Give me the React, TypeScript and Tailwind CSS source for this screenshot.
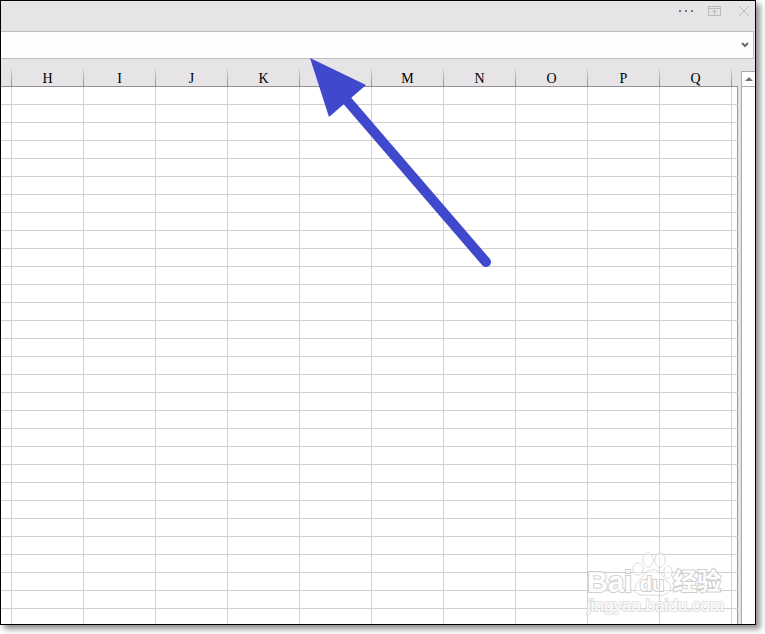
import React from 'react';

const COLUMNS = ['H', 'I', 'J', 'K', 'L', 'M', 'N', 'O', 'P', 'Q'];
const ROW_COUNT = 29;

const rows = Array.from({ length: ROW_COUNT }, (_, i) => i);

const TitleBar = () => (
  <div className="flex h-[30px] items-start justify-end gap-3 pt-1 pr-[5px]">
    <button type="button" aria-label="More" className="flex h-3 w-[17px] items-center">
      <svg width="17" height="12" viewBox="0 0 17 12" fill="#777579">
        <rect x="0" y="5" width="2" height="2" />
        <rect x="6" y="5" width="2" height="2" />
        <rect x="12" y="5" width="2" height="2" />
      </svg>
    </button>
    <button type="button" aria-label="Ribbon display options">
      <svg width="14" height="12" viewBox="0 0 14 12" fill="none" stroke="#bab8bb">
        <path d="M.5 1.5h12v9H.5zM.5 3.5h12M6.5 10V5M4 7.5L6.5 5 9 7.5" />
      </svg>
    </button>
    <button type="button" aria-label="Close" className="ml-1">
      <svg width="12" height="12" viewBox="0 0 12 12" fill="none" stroke="#bcbabd">
        <path d="M1 1l10 10M11 1L1 11" />
      </svg>
    </button>
  </div>
);

const FormulaBar = () => (
  <div className="mr-px flex h-7 items-center border border-l-0 border-[#bfbdc0] bg-[#fefdff]">
    <input aria-label="Formula bar" className="h-full min-w-0 flex-1 bg-transparent px-2 text-sm outline-none" />
    <button type="button" aria-label="Expand formula bar" className="pr-1">
      <svg width="8" height="6" viewBox="0 0 8 6" fill="none" stroke="#6c6a6d" strokeWidth="2">
        <path d="M1 1l3 3 3-3" />
      </svg>
    </button>
  </div>
);

const Sheet = () => (
  <table className="w-full table-fixed border-separate border-spacing-0">
    <colgroup>
      <col className="w-[11px]" />
      {COLUMNS.map((name) => (
        <col key={name} className="w-[72px]" />
      ))}
      <col />
    </colgroup>
    <thead>
      <tr className="h-7 bg-[#e6e4e7]">
        {['', ...COLUMNS].map((name) => (
          <th
            key={name}
            className="relative h-7 border-b border-[#929093] p-0 pt-[13px] pr-px text-center align-top font-['Liberation_Serif',serif] text-[14px] leading-[14px] font-normal text-black"
          >
            {name}
            <span className="absolute right-0 bottom-0 h-[17px] w-px bg-linear-to-b from-[#d0ced1] to-[#8f8d90]" />
          </th>
        ))}
        <th className="border-b border-[#929093] p-0" />
      </tr>
    </thead>
    <tbody>
      {rows.map((row) => (
        <tr key={row}>
          {['', ...COLUMNS].map((name) => (
            <td key={name} className="h-[18px] border-r border-b border-[#d0d0d0] p-0" />
          ))}
          <td className="h-[18px] border-r border-b border-r-[#99979a] border-b-[#d0d0d0] p-0" />
        </tr>
      ))}
      <tr>
        {['', ...COLUMNS].map((name) => (
          <td key={name} className="h-[15px] border-r border-[#d0d0d0] p-0" />
        ))}
        <td className="border-r border-[#99979a] p-0" />
      </tr>
    </tbody>
  </table>
);

const ScrollBar = () => (
  <div className="flex w-[17px] shrink-0 flex-col bg-[#e6e4e7] pt-3 pl-[3px]">
    <button
      type="button"
      aria-label="Scroll up"
      className="flex h-4 items-center justify-center border border-r-0 border-[#acaaad] bg-white"
    >
      <svg width="8" height="4" viewBox="0 0 8 4" fill="#737174">
        <path d="M4 0l4 4H0z" />
      </svg>
    </button>
    <div className="flex-1 border-l border-[#acaaad] bg-white" />
  </div>
);

const Arrow = () => (
  <svg className="pointer-events-none absolute top-[57px] left-[309px]" width="184" height="212" viewBox="0 0 184 212" fill="#4048cc">
    <path d="M0 0L56 27 19 59z" />
    <path d="M34 39L176 204" stroke="#4048cc" strokeWidth="10" strokeLinecap="round" />
  </svg>
);

const Watermark = () => (
  <div className="pointer-events-none absolute right-8 bottom-2 w-[136px] font-['Liberation_Sans','Noto_Sans_CJK_SC',sans-serif] font-bold whitespace-nowrap text-white opacity-80 [paint-order:stroke] [-webkit-text-stroke:2px_#c4c4c4]">
    <div className="flex items-end">
      <span className="w-11 text-[29px] leading-7">Bai</span>
      <div className="relative h-11 w-[42px]">
        <svg width="42" height="44" viewBox="0 0 42 44" fill="#ffffffaa" stroke="#bebebe">
          <ellipse cx="7" cy="17" rx="5" ry="6" />
          <ellipse cx="17" cy="8" rx="5" ry="7" />
          <ellipse cx="29" cy="8" rx="5" ry="7" />
          <ellipse cx="37" cy="20" rx="4" ry="6" />
          <path d="M22 18c-8 0-10 7-14 11-7 6-4 14 4 14h18c9 0 13-8 6-14-5-4-6-11-14-11z" />
        </svg>
        <span className="absolute inset-x-0 bottom-0 text-center text-[20px] leading-6">du</span>
      </div>
      <span className="text-[24px] leading-7">经验</span>
    </div>
    <div className="text-[17px] leading-5 font-normal [-webkit-text-stroke:2px_#dadada]">jingyan.baidu.com</div>
  </div>
);

export default function App() {
  return (
    <div className="overflow-hidden bg-white pb-[9px]">
      <main className="relative mr-[9px] border border-black bg-[#e6e4e7] shadow-[4px_4px_6px_rgba(0,0,0,0.45)]">
        <TitleBar />
        <FormulaBar />
        <div className="flex">
          <div className="min-w-0 flex-1 bg-white">
            <Sheet />
          </div>
          <ScrollBar />
        </div>
        <Arrow />
        <Watermark />
      </main>
    </div>
  );
}
